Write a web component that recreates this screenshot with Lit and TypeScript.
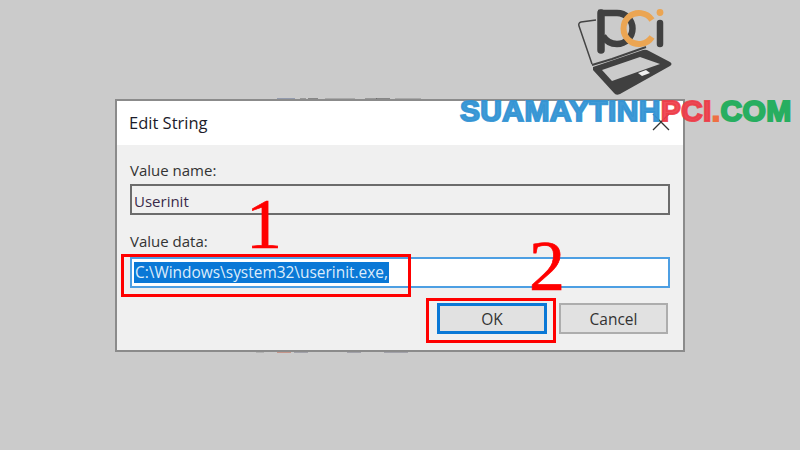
import { LitElement, html, css, svg } from "lit";
import { customElement } from "lit/decorators.js";

const SMUDGES = [
  { x: 277, y: 98, w: 18, c: "#5a6a90" },
  { x: 300, y: 98, w: 6, c: "#666" },
  { x: 308, y: 98, w: 10, c: "#444" },
  { x: 325, y: 98, w: 30, c: "#888" },
  { x: 365, y: 98, w: 12, c: "#666" },
  { x: 376, y: 98, w: 14, c: "#444" },
  { x: 395, y: 98, w: 26, c: "#888" },
  { x: 256, y: 352, w: 8, c: "#999" },
  { x: 277, y: 352, w: 14, c: "#c0604a" },
  { x: 294, y: 352, w: 14, c: "#778" },
  { x: 347, y: 352, w: 14, c: "#778" },
  { x: 384, y: 352, w: 24, c: "#778" },
];

@customElement("app-root")
export class AppRoot extends LitElement {
  static styles = css`
    :host { display: block; width: 800px; height: 450px; background: #cbcbcb; position: relative; overflow: hidden; font-family: "Open Sans", "Noto Sans", sans-serif; color: #222; }
    .stage { box-sizing: border-box; width: 800px; height: 450px; padding: 99px 115px 98px 115px; }
    .dialog { box-sizing: border-box; width: 570px; height: 253px; border: 2px solid #8b8b8b; background: #f0f0f0; display: flex; flex-direction: column; }
    .title { height: 44px; flex: none; background: #fff; display: flex; align-items: center; padding: 0 0 2px 12px; box-sizing: border-box; font-size: 16.5px; color: #1c1c2a; }
    .body { flex: 1; padding: 13px 13px 0 13px; display: flex; flex-direction: column; font-size: 15px; color: #333; }
    .lbl { height: 26px; line-height: 24px; }
    .lbl.second { line-height: 20px; }
    .field { box-sizing: border-box; width: 540px; height: 31px; display: flex; align-items: center; padding-left: 2px; font-size: 15px; }
    .name { border: 2px solid #6c6c6c; margin-bottom: 16px; color: #3a2a4a; padding-top: 2px; }
    .data { border: 2px solid #4d9fe3; background: #fff; }
    .sel { background: #0a78d6; color: #dcecfb; height: 21px; line-height: 21px; padding: 0 1px; white-space: nowrap; font-size: 15.45px; }
    .btns { display: flex; justify-content: flex-end; gap: 12px; margin-top: 15px; padding-right: 2px; }
    .btn { box-sizing: border-box; height: 31px; display: flex; align-items: center; justify-content: center; font-size: 15.5px; background: #e1e1e1; color: #333; }
    .ok { width: 110px; border: 3px solid #0a78d6; }
    .cancel { width: 109px; border: 2px solid #adadad; }
    .box { position: absolute; box-sizing: border-box; border: 3px solid #f00; }
    .box1 { left: 121px; top: 254px; width: 290px; height: 43px; }
    .box2 { left: 426px; top: 298px; width: 130px; height: 45px; }
    .num { position: absolute; font-family: "Liberation Serif", serif; color: #f00; line-height: 1; font-size: 72px; -webkit-text-stroke: 0.7px #f00; }
    .n1 { left: 246px; top: 188px; }
    .n2 { left: 529px; top: 230px; }
    .brand { position: absolute; left: 460px; top: 92px; font-family: "Liberation Sans", sans-serif; font-weight: 700; font-size: 30px; line-height: 38px; letter-spacing: 0.35px; white-space: nowrap; -webkit-text-stroke: 2px currentColor; }
    .b { color: rgba(52, 148, 212, 0.95); }
    .r { color: rgba(238, 60, 72, 0.92); }
    .o { color: #ee7043; }
    .g { color: #27ae60; }
    .logo { position: absolute; left: 570px; top: 0; }
    .close { position: absolute; left: 652px; top: 113px; }
    .smudge { position: absolute; height: 1px; opacity: 0.5; }
  `;

  render() {
    return html`
      <div class="stage">
        <div class="dialog">
          <div class="title">Edit String</div>
          <div class="body">
            <div class="lbl">Value name:</div>
            <div class="field name">Userinit</div>
            <div class="lbl second">Value data:</div>
            <div class="field data"><span class="sel">C:\\Windows\\system32\\userinit.exe,</span></div>
            <div class="btns">
              <div class="btn ok">OK</div>
              <div class="btn cancel">Cancel</div>
            </div>
          </div>
        </div>
      </div>
      ${SMUDGES.map(
        (s) => html`<div class="smudge" style="left:${s.x}px;top:${s.y}px;width:${s.w}px;background:${s.c}"></div>`
      )}
      <svg class="close" width="20" height="20" viewBox="0 0 20 20"><path d="M1 1 L17 17 M17 1 L1 17" stroke="#333" stroke-width="1.3" fill="none"/></svg>
      <div class="box box1"></div>
      <div class="box box2"></div>
      <div class="num n1">1</div>
      <div class="num n2">2</div>
      <svg class="logo" width="110" height="100" viewBox="0 0 110 100">
        ${svg`
        <path d="M26 20 L11 22 Q8 23 9 26 L22 64" fill="none" stroke="#444" stroke-width="1.5"/>
        <path d="M22 65 L42 59 L76 47" fill="none" stroke="#444" stroke-width="2"/>
        <path d="M23 67 L73 50 Q76 49 79 51 L100 62 Q103 64 100 66 L50 94 Q46 96 44 93 L23 70 Z" fill="#404040"/>
        <path d="M32 70 L70 57 L90 64 L42 81 Z" fill="#cbcbcb"/>
        <path d="M68 73 L76 70 L80 73 L72 76 Z" fill="#efefef"/>
        <path d="M31 13 L31 50" stroke="#404040" stroke-width="7.5" stroke-linecap="round" fill="none"/>
        <path d="M28 13 H47 A15.5 15.5 0 0 1 47 44 C41 44 36 41 33 36" stroke="#404040" stroke-width="6.5" fill="none"/>
        <path d="M82 20 A15.5 15.5 0 1 0 82 37" stroke="#eba553" stroke-width="6" fill="none"/>
        <path d="M90 23 L90 44" stroke="#404040" stroke-width="6.5" stroke-linecap="round"/>
        <circle cx="90" cy="12.5" r="3.4" fill="#eba553"/>
        `}
      </svg>
      <div class="brand"><span class="b">SUAMAYTINH</span><span class="r">PCI</span><span class="o">.</span><span class="g">COM</span></div>
    `;
  }
}
